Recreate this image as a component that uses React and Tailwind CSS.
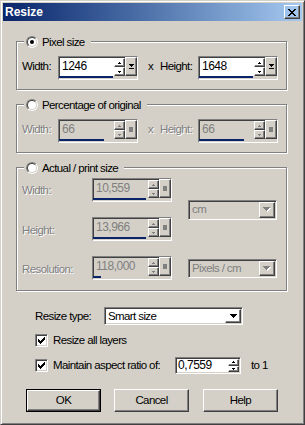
import React from "react"

const raised =
  "border border-t-white border-l-white border-r-[#404040] border-b-[#404040] shadow-[inset_-1px_-1px_0_#808080]"
const sunken =
  "border border-t-[#808080] border-l-[#808080] border-r-white border-b-white shadow-[inset_1px_1px_0_#404040,inset_-1px_-1px_0_#d4d0c8]"
const dim = "text-[#808080] [text-shadow:1px_1px_0_#fff]"

// tiny pixel glyphs (arrows, check mark, close cross)
const GLYPHS = {
  up: [".X.", "XXX"],
  down: ["XXX", ".X."],
  combo: ["XXXXXXX", ".XXXXX.", "..XXX..", "...X..."],
  preset: ["XXXXX", ".XXX.", "..X..", ".....", "XXXXX"],
  check: ["......X", ".....XX", "X...XXX", "XX.XXX.", "XXXXX..", ".XXX...", "..X...."],
  close: ["XX....XX", ".XX..XX.", "..XXXX..", "...XX...", "..XXXX..", ".XX..XX.", "XX....XX"],
}

function Pix({ name, color = "#000", shadow }) {
  const rows = GLYPHS[name]
  const w = rows[0].length
  const h = rows.length
  const cells = (fill, dx) =>
    rows.flatMap((r, y) =>
      [...r].map((c, x) =>
        c === "X" ? <rect key={`${fill}${x}-${y}`} x={x + dx} y={y + dx} width="1" height="1" fill={fill} /> : null
      )
    )
  return (
    <svg width={w + (shadow ? 1 : 0)} height={h + (shadow ? 1 : 0)} shapeRendering="crispEdges">
      {shadow && cells("#fff", 1)}
      {cells(color, 0)}
    </svg>
  )
}

function Radio({ checked }) {
  return (
    <div className="flex h-[12px] w-[12px] items-center justify-center rounded-full border border-t-[#808080] border-l-[#808080] border-r-white border-b-white">
      <div className="flex h-[10px] w-[10px] items-center justify-center rounded-full border border-t-[#404040] border-l-[#404040] border-r-[#d4d0c8] border-b-[#d4d0c8] bg-white">
        {checked && <div className="h-[4px] w-[4px] rounded-full bg-black" />}
      </div>
    </div>
  )
}

function Check() {
  return (
    <div className={`flex h-[13px] w-[13px] items-center justify-center bg-white ${sunken}`}>
      <Pix name="check" />
    </div>
  )
}

function Spin({ disabled }) {
  const color = disabled ? "#808080" : "#000"
  return (
    <div className="flex w-[11px] flex-col">
      <div className={`flex flex-1 items-center justify-center ${raised}`}>
        <Pix name="up" color={color} />
      </div>
      <div className={`flex flex-1 items-center justify-center ${raised}`}>
        <Pix name="down" color={color} />
      </div>
    </div>
  )
}

function SpinSlider({ value, bar, disabled }) {
  return (
    <div className="flex h-[24px] w-[80px] shrink-0 flex-col border border-t-[#808080] border-l-[#808080] border-r-white border-b-white">
      <div className="flex h-[19px]">
        <div className={`flex flex-1 border-t border-l border-[#404040] ${disabled ? "bg-[#d4d0c8]" : "bg-white"}`}>
          <span className={`flex-1 pl-[2px] text-[12px] leading-[17px] tracking-[-0.5px] ${disabled ? "text-[#808080]" : ""}`}>
            {value}
          </span>
          <Spin disabled={disabled} />
        </div>
        <div className={`flex w-[12px] items-center justify-center ${raised}`}>
          {disabled ? <div className="h-[5px] w-[4px] bg-[#808080]" /> : <Pix name="preset" />}
        </div>
      </div>
      <div className="h-[3px]">
        <div className="h-[2px] bg-[#0a246a]" style={{ width: bar }} />
      </div>
    </div>
  )
}

function Combo({ value, className, disabled }) {
  return (
    <div className={`flex p-[1px] ${sunken} ${disabled ? "bg-[#d4d0c8]" : "bg-white"} ${className}`}>
      <span className={`flex flex-1 items-center pl-[2px] ${disabled ? "text-[#808080]" : ""}`}>{value}</span>
      <div className={`flex w-[16px] items-center justify-center ${raised}`}>
        {disabled ? <Pix name="combo" color="#808080" shadow /> : <Pix name="combo" />}
      </div>
    </div>
  )
}

function Group({ label, checked, className, children }) {
  return (
    <div className={`relative ml-[13px] w-[271px] shrink-0 border border-[#808080] shadow-[inset_1px_1px_0_#fff,1px_1px_0_#fff] ${className}`}>
      <div className="absolute top-[-7px] left-[7px] flex h-[14px] items-center bg-[#d4d0c8] pr-[6px] pl-[2px]">
        <Radio checked={checked} />
        <span className="ml-[4px]">{label}</span>
      </div>
      {children}
    </div>
  )
}

function Label({ children, className = "", disabled }) {
  return <span className={`h-[19px] leading-[19px] ${disabled ? dim : ""} ${className}`}>{children}</span>
}

function Button({ children, isDefault }) {
  return (
    <div className={`h-[23px] w-[75px] ${isDefault ? "border border-black" : ""}`}>
      <div className={`flex h-full w-full items-center justify-center ${raised}`}>{children}</div>
    </div>
  )
}

export default function App() {
  return (
    <div className="h-[425px] w-[305px] bg-[#d4d0c8] font-['Liberation_Sans',Arial,sans-serif] text-[11.5px] leading-[13px] tracking-[-0.6px] text-black">
      <div className="flex h-full flex-col border border-t-[#d4d0c8] border-l-[#d4d0c8] border-r-[#404040] border-b-[#404040] p-[2px] shadow-[inset_1px_1px_0_#fff,inset_-1px_-1px_0_#808080]">
        {/* title bar */}
        <div className="flex h-[18px] shrink-0 items-center justify-between bg-linear-to-r from-[#0a246a] to-[#a6caf0] px-[2px]">
          <span className="text-[12px] font-bold tracking-normal text-white">Resize</span>
          <div className={`flex h-[14px] w-[16px] items-center justify-center ${raised}`}>
            <Pix name="close" />
          </div>
        </div>

        {/* Pixel size */}
        <Group label="Pixel size" checked className="mt-[20px] h-[49px]">
          <div className="flex items-start pt-[14px] pl-[5px]">
            <Label className="mt-[1px] w-[36px]">Width:</Label>
            <SpinSlider value="1246" bar={54} />
            <Label className="mt-[1px] ml-[10px] w-[12px]">x</Label>
            <Label className="mt-[1px] w-[38px]">Height:</Label>
            <SpinSlider value="1648" bar={54} />
          </div>
        </Group>

        {/* Percentage */}
        <Group label="Percentage of original" className="mt-[14px] h-[49px]">
          <div className="flex items-start pt-[14px] pl-[5px]">
            <Label disabled className="mt-[1px] w-[36px]">Width:</Label>
            <SpinSlider value="66" bar={45} disabled />
            <Label disabled className="mt-[1px] ml-[10px] w-[12px]">x</Label>
            <Label disabled className="mt-[1px] w-[38px]">Height:</Label>
            <SpinSlider value="66" bar={45} disabled />
          </div>
        </Group>

        {/* Actual / print size */}
        <Group label="Actual / print size" className="mt-[14px] h-[124px]">
          <div className="grid grid-cols-[70px_96px_89px] grid-rows-[24px_24px_24px] gap-y-[15px] pt-[10px] pl-[5px]">
            <Label disabled className="mt-[3px]">Width:</Label>
            <SpinSlider value="10,559" bar={53} disabled />
            <Combo value="cm" disabled className="row-span-2 h-[20px] self-center" />
            <Label disabled className="mt-[4px]">Height:</Label>
            <SpinSlider value="13,966" bar={53} disabled />
            <Label disabled className="mt-[4px]">Resolution:</Label>
            <SpinSlider value="118,000" bar={8} disabled />
            <Combo value="Pixels / cm" disabled className="mt-[3px] h-[19px]" />
          </div>
        </Group>

        {/* resize type */}
        <div className="mt-[16px] ml-[32px] flex items-center">
          <span className="w-[69px]">Resize type:</span>
          <Combo value="Smart size" className="h-[18px] w-[139px]" />
        </div>

        <div className="mt-[9px] ml-[32px] flex items-center">
          <Check />
          <span className="ml-[5px]">Resize all layers</span>
        </div>

        <div className="mt-[10px] ml-[32px] flex items-center">
          <Check />
          <span className="ml-[5px] w-[122px]">Maintain aspect ratio of:</span>
          <div className={`flex h-[17px] w-[66px] bg-white p-[1px] ${sunken}`}>
            <span className="flex flex-1 items-center pl-[1px] text-[12px] tracking-[-0.5px]">0,7559</span>
            <Spin />
          </div>
          <span className="ml-[10px]">to 1</span>
        </div>

        {/* buttons */}
        <div className="mt-[15px] ml-[23px] flex">
          <Button isDefault>OK</Button>
          <div className="ml-[13px]">
            <Button>Cancel</Button>
          </div>
          <div className="ml-[14px]">
            <Button>Help</Button>
          </div>
        </div>
      </div>
    </div>
  )
}
